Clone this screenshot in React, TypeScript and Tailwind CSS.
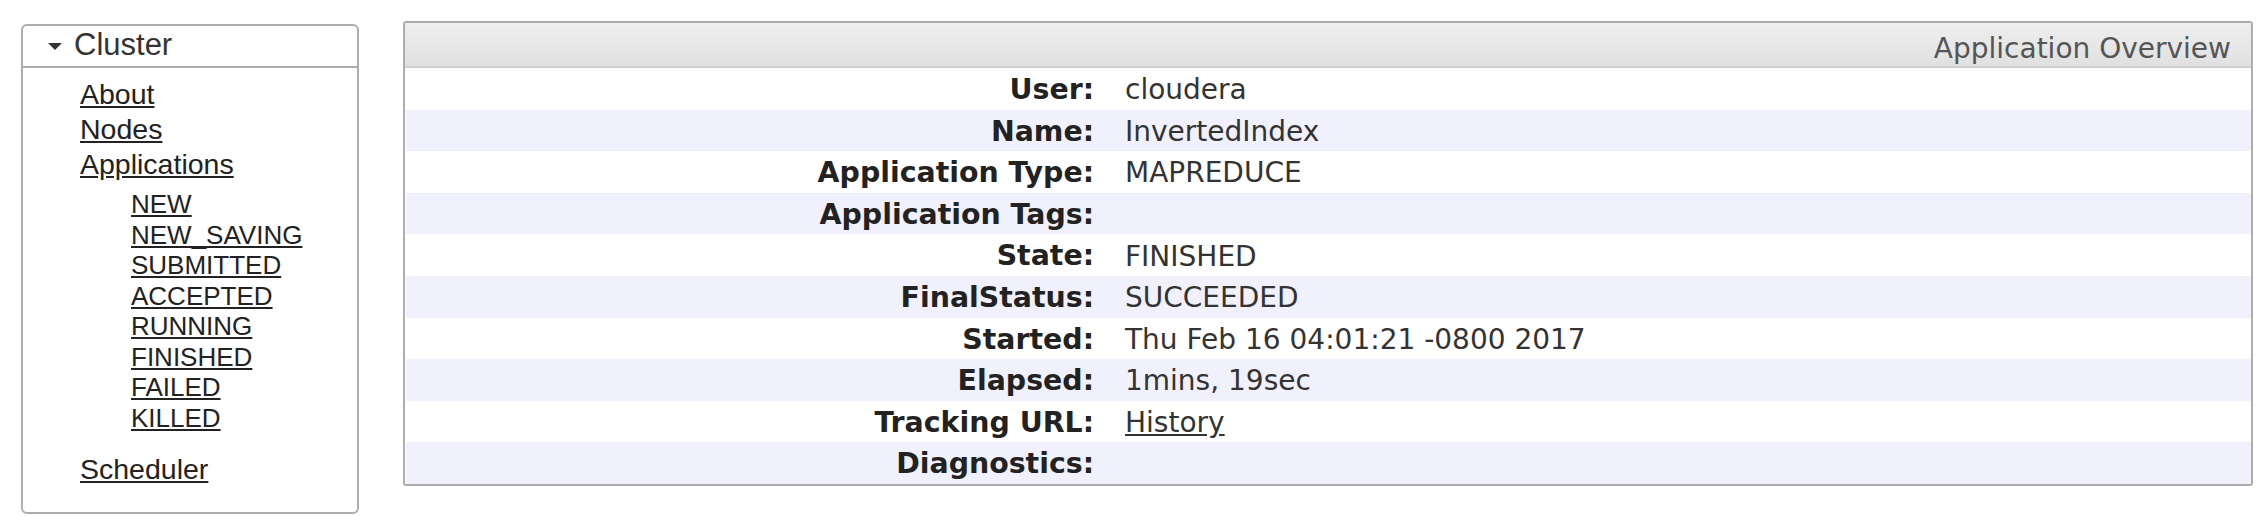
const mainLinks = ["About", "Nodes", "Applications"];
const appStates = ["NEW", "NEW_SAVING", "SUBMITTED", "ACCEPTED", "RUNNING", "FINISHED", "FAILED", "KILLED"];

const overview: { label: string; value: string; link?: boolean }[] = [
  { label: "User:", value: "cloudera" },
  { label: "Name:", value: "InvertedIndex" },
  { label: "Application Type:", value: "MAPREDUCE" },
  { label: "Application Tags:", value: "" },
  { label: "State:", value: "FINISHED" },
  { label: "FinalStatus:", value: "SUCCEEDED" },
  { label: "Started:", value: "Thu Feb 16 04:01:21 -0800 2017" },
  { label: "Elapsed:", value: "1mins, 19sec" },
  { label: "Tracking URL:", value: "History", link: true },
  { label: "Diagnostics:", value: "" },
];

function Sidebar() {
  return (
    <div className="w-[338px] mt-[3px] shrink-0 border-2 border-[#adadad] rounded-[6px] font-['Liberation_Sans',Arial,sans-serif] text-[#222]">
      <div className="h-[42px] flex items-center pl-[25px] pb-[1px] border-b-2 border-[#adadad] text-[31px] text-[#333]">
        <svg width="14" height="7" viewBox="0 0 14 7" className="mt-[2px]">
          <polygon points="0,0 14,0 7,7" fill="#333" />
        </svg>
        <span className="ml-[12px]">Cluster</span>
      </div>
      <div className="pl-[57px] pt-[9px] pb-[25px]">
        {mainLinks.map((l) => (
          <div key={l} className="text-[28.5px] leading-[35px]">
            <a className="underline">{l}</a>
          </div>
        ))}
        <div className="pl-[51px] mt-[7px]">
          {appStates.map((s) => (
            <div key={s} className="text-[26px] leading-[30.5px]">
              <a className="underline">{s}</a>
            </div>
          ))}
        </div>
        <div className="mt-[19px] text-[28.5px] leading-[35px]">
          <a className="underline">Scheduler</a>
        </div>
      </div>
    </div>
  );
}

function Overview() {
  return (
    <div className="w-[1850px] shrink-0 border-2 border-[#adadad] rounded-[3px] font-['DejaVu_Sans',sans-serif] text-[28px]">
      <div className="h-[45px] flex items-center justify-end pr-[20px] pt-[8px] bg-linear-to-b from-[#efefef] to-[#e0e0e0] border-b-2 border-[#d0d0d0] text-[#555]">
        Application Overview
      </div>
      <div className="pl-[1px]">
        {overview.map((r, i) => (
          <div key={r.label} className={`h-[41.6px] pt-[3px] flex items-center ${i % 2 === 1 ? "bg-[#f1f1fd]" : "bg-white"}`}>
            <div className="w-[703px] pr-[15px] text-right font-bold text-[28.4px] text-[#222]">{r.label}</div>
            <div className="pl-[16px] text-[#333]">
              {r.link ? <a className="underline">{r.value}</a> : r.value}
            </div>
          </div>
        ))}
      </div>
    </div>
  );
}

export default function App() {
  return (
    <div className="w-[2268px] h-[516px] bg-white flex items-start gap-[44px] pl-[21px] pt-[21px]">
      <Sidebar />
      <Overview />
    </div>
  );
}
